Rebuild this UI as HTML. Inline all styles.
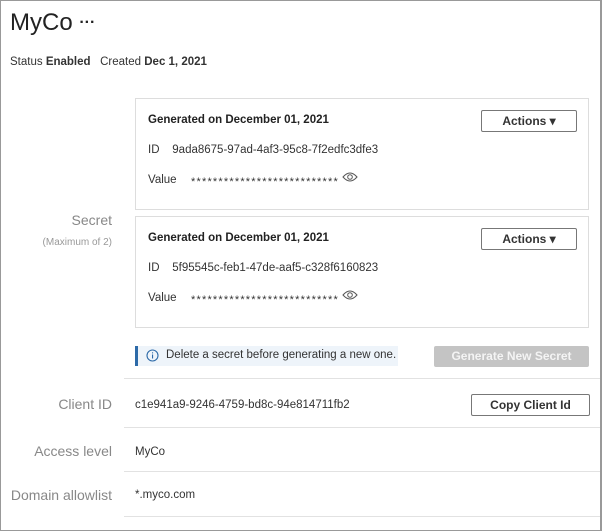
<!DOCTYPE html>
<html><head><style>
body{margin:0;width:602px;height:531px;overflow:hidden;background:#fff;font-family:"Liberation Sans",sans-serif;color:#333;}
.frame{position:absolute;left:0;top:0;width:599px;height:529px;border:1px solid #999;border-right:2px solid #999;}
.a{position:absolute;white-space:nowrap;}
.card{position:absolute;left:135px;width:452px;height:110px;border:1px solid #ddd;}
.btn{position:absolute;border:1px solid #777;border-radius:2px;font-size:12px;font-weight:bold;color:#333;text-align:center;background:#fff;}
.lbl{position:absolute;right:490px;color:#888;font-size:14px;white-space:nowrap;}
.sep{position:absolute;left:124px;width:476px;height:1px;background:#e2e2e2;}
.ast{letter-spacing:1.2px;font-size:11px;}
</style></head><body>
<div class="frame"></div>
<div class="a" style="left:10px;top:9px;font-size:24px;color:#222;">MyCo <span style="font-size:16px;font-weight:bold;position:relative;top:-3px;">···</span></div>
<div class="a" style="left:10px;top:56px;font-size:11.5px;">Status <b>Enabled</b> &nbsp; Created <b>Dec 1, 2021</b></div>

<div class="card" style="top:98px;">
 <div class="a" style="left:12px;top:15px;font-size:11.5px;font-weight:bold;color:#222;">Generated on December 01, 2021</div>
 <div class="btn" style="left:345px;top:11px;width:94px;height:20px;line-height:20px;">Actions &#9662;</div>
 <div class="a" style="left:12px;top:45px;font-size:11.5px;">ID &nbsp;&nbsp; 9ada8675-97ad-4af3-95c8-7f2edfc3dfe3</div>
 <div class="a" style="left:12px;top:75px;font-size:11.5px;">Value</div>
 <div class="a ast" style="left:55px;top:77px;">***************************</div>
 <svg class="a" style="left:206px;top:72px" width="16" height="12" viewBox="0 0 16 12"><path d="M1 6 Q8 -2 15 6 Q8 14 1 6Z" fill="none" stroke="#555" stroke-width="1"/><circle cx="8" cy="6" r="2.3" fill="none" stroke="#555"/></svg>
</div>
<div class="card" style="top:216px;">
 <div class="a" style="left:12px;top:15px;font-size:11.5px;font-weight:bold;color:#222;">Generated on December 01, 2021</div>
 <div class="btn" style="left:345px;top:11px;width:94px;height:20px;line-height:20px;">Actions &#9662;</div>
 <div class="a" style="left:12px;top:45px;font-size:11.5px;">ID &nbsp;&nbsp; 5f95545c-feb1-47de-aaf5-c328f6160823</div>
 <div class="a" style="left:12px;top:75px;font-size:11.5px;">Value</div>
 <div class="a ast" style="left:55px;top:77px;">***************************</div>
 <svg class="a" style="left:206px;top:72px" width="16" height="12" viewBox="0 0 16 12"><path d="M1 6 Q8 -2 15 6 Q8 14 1 6Z" fill="none" stroke="#555" stroke-width="1"/><circle cx="8" cy="6" r="2.3" fill="none" stroke="#555"/></svg>
</div>

<div class="lbl" style="top:212px;">Secret</div>
<div class="lbl" style="top:237px;font-size:10px;color:#999;">(Maximum of 2)</div>

<div class="a" style="left:135px;top:346px;width:260px;height:20px;background:#eef4fa;border-left:3px solid #2d6aa8;"></div>
<svg class="a" style="left:146px;top:349px" width="13" height="13" viewBox="0 0 13 13"><circle cx="6.5" cy="6.5" r="5.5" fill="none" stroke="#2d6aa8" stroke-width="1.1"/><rect x="6" y="5.5" width="1.1" height="4" fill="#2d6aa8"/><rect x="6" y="3.3" width="1.1" height="1.1" fill="#2d6aa8"/></svg>
<div class="a" style="left:166px;top:349px;font-size:11.5px;">Delete a secret before generating a new one.</div>
<div class="a" style="left:434px;top:346px;width:155px;height:21px;background:#c4c4c4;border-radius:2px;color:#f4f4f4;font-size:12px;font-weight:bold;text-align:center;line-height:21px;">Generate New Secret</div>

<div class="sep" style="top:378px;"></div>
<div class="lbl" style="top:396px;">Client ID</div>
<div class="a" style="left:135px;top:399px;font-size:11.5px;">c1e941a9-9246-4759-bd8c-94e814711fb2</div>
<div class="btn" style="left:471px;top:394px;width:117px;height:20px;line-height:20px;">Copy Client Id</div>
<div class="sep" style="top:427px;"></div>
<div class="lbl" style="top:443px;">Access level</div>
<div class="a" style="left:135px;top:446px;font-size:11.5px;">MyCo</div>
<div class="sep" style="top:471px;"></div>
<div class="lbl" style="top:487px;">Domain allowlist</div>
<div class="a" style="left:135px;top:489px;font-size:11.5px;">*.myco.com</div>
<div class="sep" style="top:516px;"></div>
</body></html>
